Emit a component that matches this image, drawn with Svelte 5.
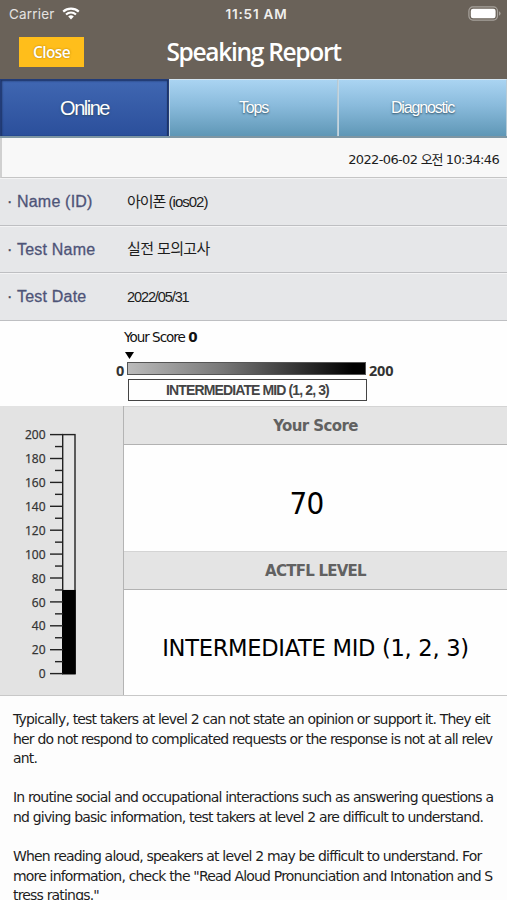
<script lang="ts">
    type Tab = { id: string; label: string };

    const tabs: Tab[] = [
        { id: "online", label: "Online" },
        { id: "tops", label: "Tops" },
        { id: "diagnostic", label: "Diagnostic" },
    ];

    const info = [
        { key: "id", label: "Name (ID)", value: "아이폰 (ios02)" },
        { key: "test", label: "Test Name", value: "실전 모의고사" },
        { key: "date", label: "Test Date", value: "2022/05/31" },
    ];

    // The feedback text is broken by character count, not by word.
    const feedback = [
        "Typically, test takers at level 2 can not state an opinion or support it. They eit",
        "her do not respond to complicated requests or the response is not at all relev",
        "ant.",
        "",
        "In routine social and occupational interactions such as answering questions a",
        "nd giving basic information, test takers at level 2 are difficult to understand.",
        "",
        "When reading aloud, speakers at level 2 may be difficult to understand. For",
        "more information, check the \"Read Aloud Pronunciation and Intonation and S",
        "tress ratings.\"",
    ];

    const maxScore = 200;
    const score = 70;
    const level = "INTERMEDIATE MID (1, 2, 3)";

    let active = $state("online");

    // Vertical gauge: 0 at the bottom, 200 at the top.
    const gaugeTop = 28.6;
    const gaugeHeight = 239;
    const gaugeY = (v: number) => gaugeTop + gaugeHeight * (1 - v / maxScore);
    const ticks = Array.from({ length: 21 }, (_, i) => i * 10);
</script>

<div class="screen">
    <header>
        <div class="status">
            <div class="carrier">
                <span>Carrier</span>
                <svg width="18" height="13" viewBox="0 0 18 13">
                    <path d="M1.2 4.6C5.6 .7 12.4 .7 16.8 4.6" />
                    <path d="M4 7.5C6.9 5 11.1 5 14 7.5" />
                    <path class="dot" d="M9 12.4L6.2 9.4Q9 7.2 11.8 9.4Z" />
                </svg>
            </div>
            <span class="clock">11:51 AM</span>
            <svg class="battery" width="33" height="15" viewBox="0 0 33 15">
                <rect class="shell" x=".9" y=".9" width="28.6" height="13.2" rx="4" />
                <rect class="charge" x="2.8" y="2.8" width="24.8" height="9.4" rx="2.2" />
                <path class="cap" d="M31 5.2q1.6 .8 1.6 2.3t-1.6 2.3z" />
            </svg>
        </div>
        <div class="title-bar">
            <button class="close">Close</button>
            <h1>Speaking Report</h1>
        </div>
    </header>

    <nav>
        {#each tabs as tab (tab.id)}
            <button
                class="tab {tab.id}"
                class:active={active === tab.id}
                onclick={() => (active = tab.id)}><span>{tab.label}</span></button
            >
        {/each}
    </nav>

    <div class="stamp">2022-06-02 <i>오전</i> 10:34:46</div>

    <dl>
        {#each info as row (row.key)}
            <div class="row">
                <dt><b>·</b><span>{row.label}</span></dt>
                <dd class={row.key}>{row.value}</dd>
            </div>
        {/each}
    </dl>

    <section class="range">
        <div class="caption"><span>Your Score</span> <b>0</b></div>
        <svg class="marker" width="9" height="7" viewBox="0 0 9 7">
            <path d="M0 0H9L4.5 7Z" />
        </svg>
        <div class="scale">
            <span class="min">0</span>
            <div class="gradient"></div>
            <span class="max">200</span>
        </div>
        <div class="level-box"><span>{level}</span></div>
    </section>

    <section class="result">
        <div class="gauge">
            <svg width="123" height="289" viewBox="0 0 123 289">
                <rect class="tube" x="62.7" y={gaugeTop} width="12.3" height={gaugeHeight} />
                <rect
                    class="fill"
                    x="62"
                    y={gaugeY(score)}
                    width="13.7"
                    height={gaugeHeight + gaugeTop - gaugeY(score) + 0.7}
                />
                {#each ticks as t (t)}
                    <path d="M{t % 20 === 0 ? 50 : 55} {gaugeY(t)}H63" />
                    {#if t % 20 === 0}
                        <text x="45.5" y={gaugeY(t) + 4.6}>{t}</text>
                    {/if}
                {/each}
            </svg>
        </div>
        <div class="scores">
            <h2 class="score-head"><span>Your Score</span></h2>
            <div class="score">{score}</div>
            <h2 class="level-head"><span>ACTFL LEVEL</span></h2>
            <div class="level"><span>{level}</span></div>
        </div>
    </section>

    <div class="feedback">
        {#each feedback as line, i (i)}
            <p>{line}</p>
        {/each}
    </div>
</div>

<style>
    :global(body) {
        background: #fdfdfd;
        overflow: hidden;
    }

    .screen {
        width: 507px;
        height: 900px;
        overflow: hidden;
        background: #fdfdfd;
        color: #1d1d1d;
        font-family: "DejaVu Sans", "Noto Sans CJK KR", sans-serif;
    }

    button {
        border: 0;
        padding: 0;
        font: inherit;
        cursor: pointer;
    }

    header {
        height: 79px;
        background: #6a6259;
        color: #fff;
    }

    .status {
        display: grid;
        grid-template-columns: 1fr auto 1fr;
        align-items: center;
        height: 27px;
        padding: 0 6px 0 9px;
        box-sizing: border-box;
        font-family: Inter, sans-serif;
    }

    .carrier {
        display: flex;
        align-items: center;
        gap: 7px;
        font-size: 13.5px;
        letter-spacing: 0.2px;
        color: #e5e3e1;
    }

    .carrier svg {
        fill: none;
        stroke: #fff;
        stroke-width: 2.2;
    }

    .carrier .dot {
        fill: #fff;
        stroke: none;
    }

    .clock {
        padding-left: 3px;
        font-size: 13.5px;
        font-weight: 600;
        letter-spacing: 0.8px;
        color: #f0efed;
    }

    .battery {
        justify-self: end;
    }

    .shell {
        fill: none;
        stroke: #a7a29c;
        stroke-width: 1.2;
    }

    .charge {
        fill: #fff;
    }

    .cap {
        fill: #a7a29c;
    }

    .title-bar {
        display: grid;
        grid-template-columns: 84px 1fr 84px;
        align-items: center;
        height: 50px;
        font-family: "Open Sans", sans-serif;
    }

    .close {
        width: 65px;
        height: 30px;
        margin-left: 19px;
        background: #ffbe1b;
        color: #fff;
        font-size: 15.5px;
        font-weight: 600;
        letter-spacing: -0.6px;
        text-shadow: 0 0 2px #a87400;
    }

    h1 {
        margin: 0;
        text-align: center;
        font-size: 24.5px;
        font-weight: 600;
        line-height: 30px;
        letter-spacing: -1.3px;
    }

    nav {
        display: grid;
        grid-template-columns: 169px 169px 169px;
        height: 59px;
        box-sizing: border-box;
        border-bottom: 2px solid #7e96a3;
    }

    .tab {
        background: linear-gradient(#aad4f2, #8abbdc 45%, #5f97b6);
        border-top: 1px solid #d2e5f2;
        border-left: 1px solid #c2d6e2;
        border-right: 1px solid #b6c9d4;
        color: #fff;
        font-family: "Liberation Sans", sans-serif;
        font-size: 16px;
        letter-spacing: -1.15px;
        text-shadow: 0 1px 2px #2d4c60;
    }

    .tab.active {
        background: linear-gradient(#4067b2, #2b4f9b);
        border-color: #223c78;
        box-shadow: inset 1px 1px 2px #1c3263, inset -1px 0 1px #1c3263;
    }

    .tab.online {
        font-size: 20px;
        letter-spacing: -1.5px;
    }

    .stamp {
        height: 40px;
        box-sizing: border-box;
        border-left: 2px solid #d0d0d0;
        border-bottom: 1px solid #c5c5c5;
        background: #f8f8f8;
        padding-right: 8px;
        text-align: right;
        font-size: 13px;
        line-height: 44px;
        letter-spacing: -0.65px;
    }

    .stamp i {
        font-style: normal;
        font-family: "Noto Sans CJK KR", sans-serif;
        letter-spacing: -1.2px;
        line-height: 1;
    }

    dl {
        margin: 0;
    }

    .row {
        display: flex;
        align-items: center;
        height: 47.6px;
        box-sizing: border-box;
        background: #e6e7e9;
        border-top: 1px solid #f3f3f4;
        border-bottom: 1px solid #bebfc2;
        font-family: "Liberation Sans", "Noto Sans CJK KR", sans-serif;
    }

    dt {
        display: flex;
        width: 127px;
        padding-top: 1px;
        box-sizing: border-box;
        color: #4e5478;
        font-size: 16px;
        letter-spacing: 0.2px;
        -webkit-text-stroke: 0.3px #4e5478;
    }

    dt b {
        width: 10px;
        padding-left: 7px;
        font-weight: normal;
        color: #444;
    }

    dd {
        margin: 0;
        font-size: 14.5px;
        line-height: 20px;
        letter-spacing: -1.1px;
    }

    dd.id {
        font-size: 15px;
        letter-spacing: -1px;
    }

    dd.test {
        font-size: 15px;
        letter-spacing: -0.6px;
    }

    .range {
        height: 85.2px;
        padding: 7px 0 0 124px;
        box-sizing: border-box;
        background: #fefefe;
    }

    .caption {
        height: 19px;
        font-size: 13.5px;
        line-height: 19px;
        letter-spacing: -1px;
        color: #111;
    }

    .marker {
        display: block;
        margin: 5px 0 3px 1px;
    }

    .scale {
        display: flex;
        align-items: center;
        height: 14px;
        margin-left: -8px;
        font-family: "Open Sans", sans-serif;
        font-size: 14.5px;
        font-weight: bold;
        color: #333;
    }

    .scale .min {
        width: 11px;
        padding-top: 4px;
    }

    .scale .max {
        padding: 4px 0 0 3px;
        letter-spacing: -0.2px;
    }

    .gradient {
        width: 239px;
        height: 13px;
        box-sizing: border-box;
        border: 1px solid #555;
        background: linear-gradient(90deg, #bbb, #777 40%, #000 95%);
    }

    .level-box {
        width: 239px;
        height: 22px;
        margin: 3px 0 0 4px;
        box-sizing: border-box;
        border: 1.5px solid #444;
        text-align: center;
        font-family: "Liberation Sans", sans-serif;
        font-size: 14px;
        font-weight: bold;
        line-height: 20px;
        letter-spacing: -0.88px;
        color: #444;
    }

    .result {
        display: flex;
        height: 290px;
        box-sizing: border-box;
        border-bottom: 1px solid #c8c8c8;
    }

    .gauge {
        width: 123px;
        background: #e3e3e3;
        border-right: 1px solid #b4b4b4;
    }

    .gauge svg {
        display: block;
    }

    .gauge path {
        stroke: #222;
        stroke-width: 1.4;
    }

    .tube {
        fill: #e6e6e6;
        stroke: #222;
        stroke-width: 1.4;
    }

    .gauge text {
        font-family: "Open Sans", sans-serif;
        font-size: 12px;
        text-anchor: end;
        fill: #333;
        stroke: #333;
        stroke-width: 0.25;
    }

    .scores {
        flex: 1;
        background: #fefefe;
        text-align: center;
        color: #000;
    }

    h2 {
        display: flex;
        align-items: center;
        justify-content: center;
        height: 39px;
        margin: 0;
        box-sizing: border-box;
        background: #e4e4e4;
        border-top: 1px solid #d4d4d4;
        border-bottom: 1px solid #b2b2b2;
        padding-top: 2px;
        font-size: 15px;
        color: #616161;
        letter-spacing: -0.6px;
    }

    .level-head {
        letter-spacing: -0.75px;
    }

    .score {
        height: 106px;
        padding-right: 18px;
        font-family: "DejaVu Sans Condensed", "DejaVu Sans", sans-serif;
        font-stretch: condensed;
        font-size: 31px;
        line-height: 116px;
        letter-spacing: -0.8px;
    }

    .level {
        font-size: 22.6px;
        line-height: 117px;
        letter-spacing: -0.3px;
    }

    .feedback {
        padding: 14px 0 0 13px;
    }

    .feedback p {
        height: 19.6px;
        margin: 0;
        white-space: pre;
        font-size: 14px;
        line-height: 19.6px;
        letter-spacing: -0.82px;
    }
</style>
